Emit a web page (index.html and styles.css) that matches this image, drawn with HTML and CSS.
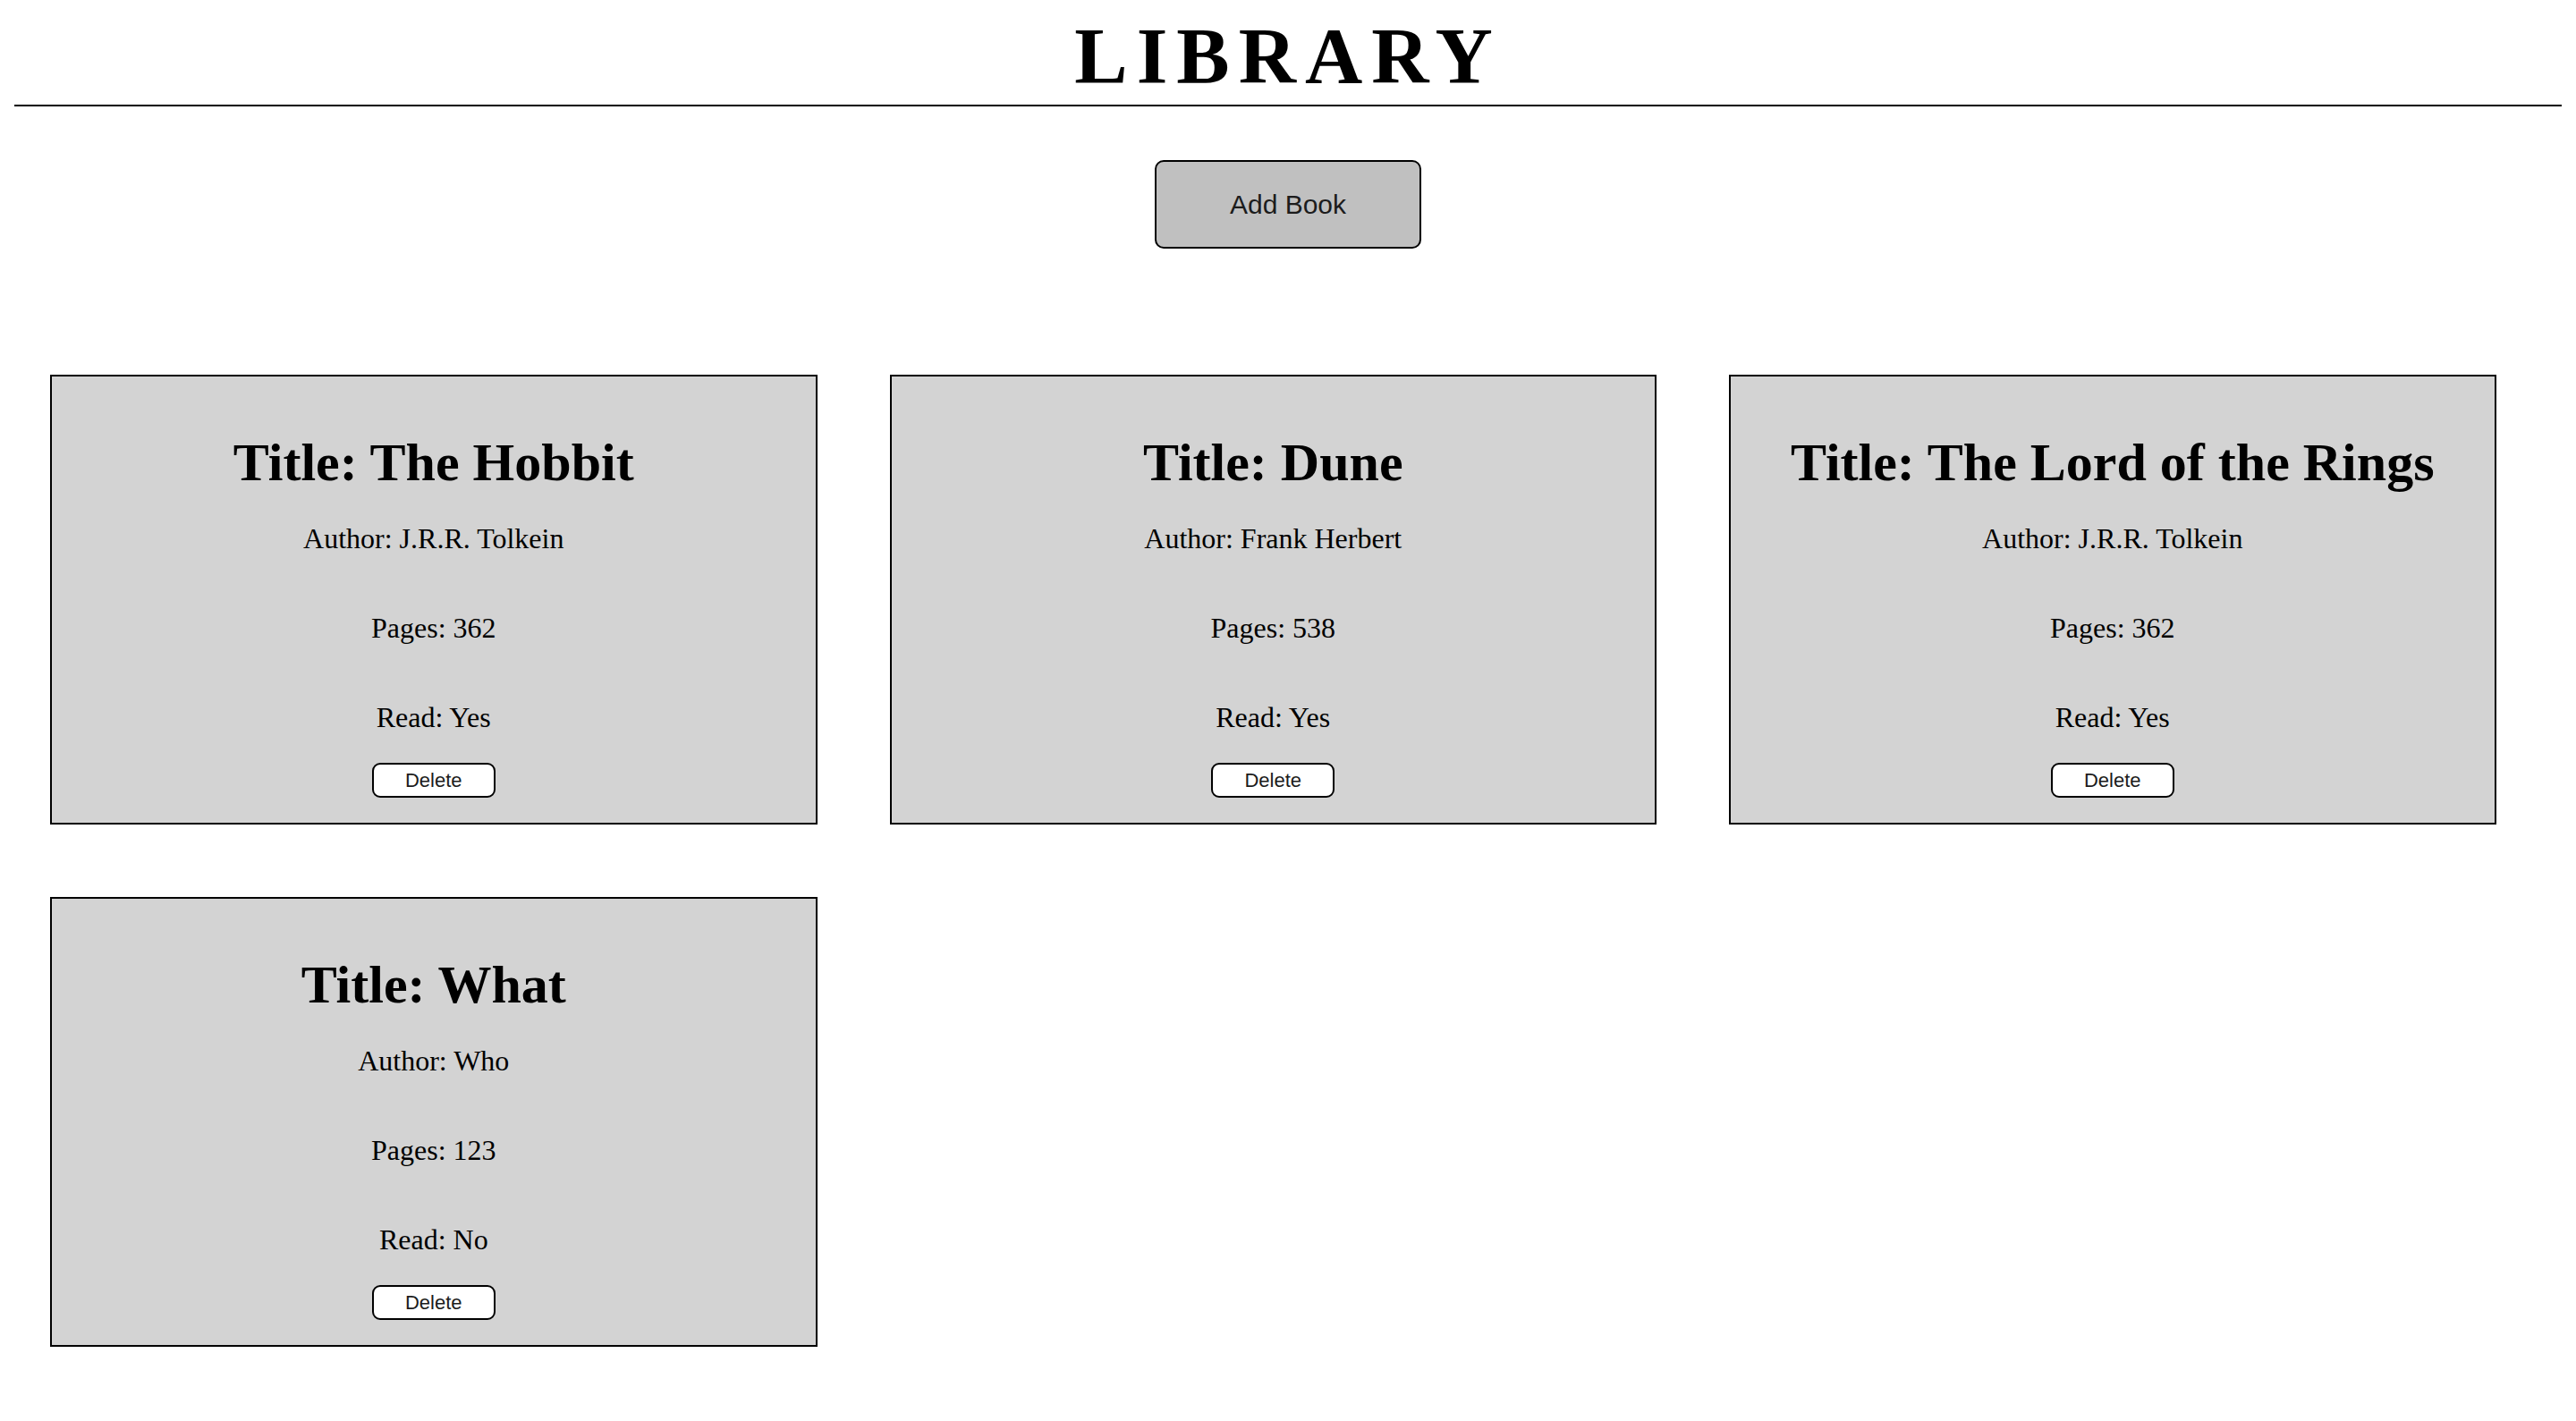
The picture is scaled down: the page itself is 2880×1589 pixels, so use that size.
FILE: index.html
```html
<!DOCTYPE html>
<html lang="en">
<head>
<meta charset="utf-8">
<title>Library</title>
<link rel="stylesheet" href="styles.css">
</head>
<body>
<header class="site-header">
  <h1 class="site-title">LIBRARY</h1>
</header>
<div class="toolbar">
  <button class="add-btn" type="button">Add Book</button>
</div>
<main class="library">
  <div class="card">
    <h2 class="card-title">Title: The Hobbit</h2>
    <p class="card-line author">Author: J.R.R. Tolkein</p>
    <p class="card-line">Pages: 362</p>
    <p class="card-line">Read: Yes</p>
    <button class="del-btn" type="button">Delete</button>
  </div>
  <div class="card">
    <h2 class="card-title">Title: Dune</h2>
    <p class="card-line author">Author: Frank Herbert</p>
    <p class="card-line">Pages: 538</p>
    <p class="card-line">Read: Yes</p>
    <button class="del-btn" type="button">Delete</button>
  </div>
  <div class="card">
    <h2 class="card-title">Title: The Lord of the Rings</h2>
    <p class="card-line author">Author: J.R.R. Tolkein</p>
    <p class="card-line">Pages: 362</p>
    <p class="card-line">Read: Yes</p>
    <button class="del-btn" type="button">Delete</button>
  </div>
  <div class="card">
    <h2 class="card-title">Title: What</h2>
    <p class="card-line author">Author: Who</p>
    <p class="card-line">Pages: 123</p>
    <p class="card-line">Read: No</p>
    <button class="del-btn" type="button">Delete</button>
  </div>
</main>
</body>
</html>
```
FILE: styles.css
```css
html, body {
  background: #ffffff;
}
body {
  margin: 0 16px;
  font-family: "Liberation Serif", "Times New Roman", serif;
  color: #000;
}
.site-header {
  padding-top: 13px;
}
.site-title {
  margin: 0;
  font-family: "Liberation Serif", "Times New Roman", serif;
  font-weight: bold;
  font-size: 89px;
  line-height: 99px;
  letter-spacing: 10px;
  text-align: center;
  padding-bottom: 5px;
  border-bottom: 2px solid #000;
}
.toolbar {
  display: flex;
  justify-content: center;
  padding-top: 60px;
}
.add-btn {
  box-sizing: border-box;
  width: 298px;
  height: 99px;
  background: #c0c0c0;
  border: 2px solid #000;
  border-radius: 10px;
  font-family: "Liberation Sans", Arial, sans-serif;
  font-size: 30px;
  color: #1c1c1c;
  padding: 0;
}
.library {
  display: grid;
  grid-template-columns: repeat(3, 857.5px);
  column-gap: 81px;
  row-gap: 81px;
  padding: 141px 0 0 40px;
}
.card {
  box-sizing: border-box;
  height: 503px;
  background: #d3d3d3;
  border: 2px solid #000;
  display: flex;
  flex-direction: column;
  align-items: center;
  padding: 61px 20px 28px;
  text-align: center;
}
.card-title {
  margin: 0;
  font-size: 60px;
  line-height: 70px;
  font-weight: bold;
  white-space: nowrap;
}
.card-line {
  margin: 64px 0 0;
  font-size: 32px;
  line-height: 36px;
}
.card-line.author {
  margin-top: 32px;
}
.del-btn {
  box-sizing: border-box;
  margin-top: 33px;
  width: 138px;
  height: 39px;
  padding: 0;
  background: #ffffff;
  border: 2px solid #000;
  border-radius: 9px;
  font-family: "Liberation Sans", Arial, sans-serif;
  font-size: 22px;
  color: #1c1c1c;
}
```
